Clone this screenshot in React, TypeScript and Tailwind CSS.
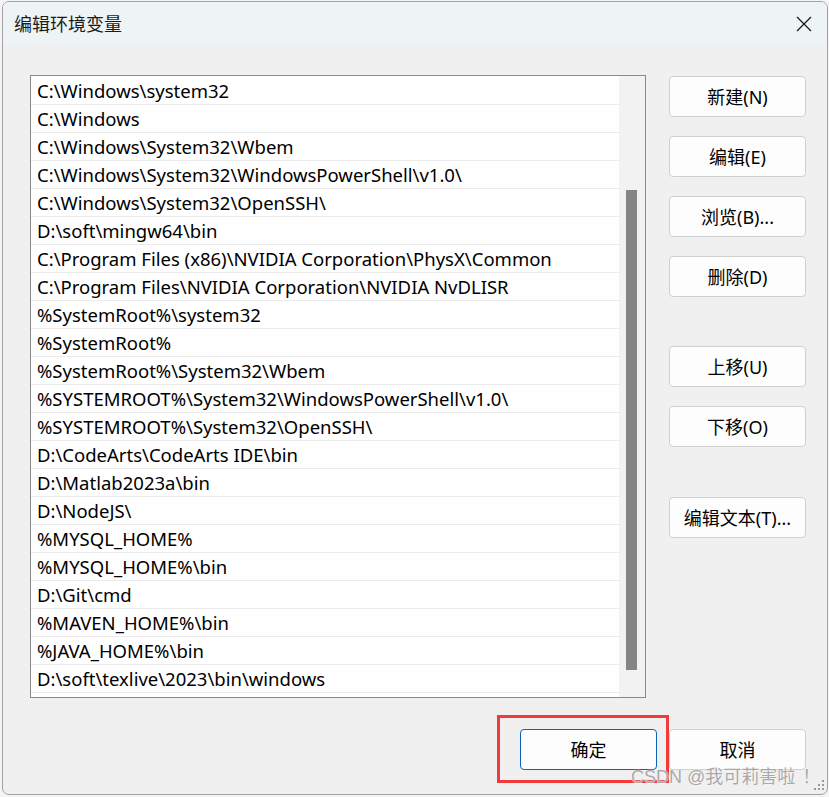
import React from "react";

const rows = [
  "C:\\Windows\\system32",
  "C:\\Windows",
  "C:\\Windows\\System32\\Wbem",
  "C:\\Windows\\System32\\WindowsPowerShell\\v1.0\\",
  "C:\\Windows\\System32\\OpenSSH\\",
  "D:\\soft\\mingw64\\bin",
  "C:\\Program Files (x86)\\NVIDIA Corporation\\PhysX\\Common",
  "C:\\Program Files\\NVIDIA Corporation\\NVIDIA NvDLISR",
  "%SystemRoot%\\system32",
  "%SystemRoot%",
  "%SystemRoot%\\System32\\Wbem",
  "%SYSTEMROOT%\\System32\\WindowsPowerShell\\v1.0\\",
  "%SYSTEMROOT%\\System32\\OpenSSH\\",
  "D:\\CodeArts\\CodeArts IDE\\bin",
  "D:\\Matlab2023a\\bin",
  "D:\\NodeJS\\",
  "%MYSQL_HOME%",
  "%MYSQL_HOME%\\bin",
  "D:\\Git\\cmd",
  "%MAVEN_HOME%\\bin",
  "%JAVA_HOME%\\bin",
  "D:\\soft\\texlive\\2023\\bin\\windows",
];

const font = "font-['Noto_Sans','Noto_Sans_CJK_SC',sans-serif]";

function Btn({ children, cls = "" }: { children: React.ReactNode; cls?: string }) {
  return (
    <div
      className={`w-[137px] h-[41px] rounded-[4px] border bg-[#fdfdfd] flex items-center justify-center text-[18px] leading-none text-black ${cls}`}
    >
      {children}
    </div>
  );
}

export default function App() {
  return (
    <div className={`relative w-[829px] h-[797px] overflow-hidden bg-[#f4f4f4] pl-[2px] pt-[1px] ${font}`}>
      <div className="w-[826px] h-[794px] rounded-[7px] border border-[#a3a3a3] bg-[#f0f0f0] overflow-hidden flex flex-col">
        {/* title bar */}
        <div className="h-[43px] bg-[#eef3f5] flex items-center justify-between pl-[11px] pr-[15px]">
          <span className="text-[18px] leading-none text-[#1b1b1b]">编辑环境变量</span>
          <svg width="16" height="16" viewBox="0 0 16 16">
            <path d="M1 1 L15 15 M15 1 L1 15" stroke="#1b1b1b" strokeWidth="1.3" />
          </svg>
        </div>
        {/* body */}
        <div className="flex-1 pl-[27px] pt-[30px] flex flex-col">
          <div className="flex">
            <div className="w-[616px] h-[623px] border border-[#8a8a8a] bg-white flex">
              <div className="w-[588px] pt-[1px] flex flex-col">
                {rows.map((r) => (
                  <div
                    key={r}
                    className="h-[28px] border-b border-[#ebebeb] flex items-center pl-[6px] pt-[2px] text-[18.5px] leading-none text-black whitespace-nowrap"
                  >
                    {r}
                  </div>
                ))}
              </div>
              <div className="w-[26px] h-full bg-[#f2f2f2] pl-[7px] pt-[114px]">
                <div className="w-[11px] h-[480px] bg-[#858585]" />
              </div>
            </div>
            <div className="ml-[23px] mt-[1px] flex flex-col">
              <Btn cls="border-[#d0d0d0]">新建(N)</Btn>
              <Btn cls="border-[#d0d0d0] mt-[19px]">编辑(E)</Btn>
              <Btn cls="border-[#d0d0d0] mt-[19px]">浏览(B)...</Btn>
              <Btn cls="border-[#d0d0d0] mt-[19px]">删除(D)</Btn>
              <Btn cls="border-[#d0d0d0] mt-[49px]">上移(U)</Btn>
              <Btn cls="border-[#d0d0d0] mt-[19px]">下移(O)</Btn>
              <Btn cls="border-[#d0d0d0] mt-[50px]">编辑文本(T)...</Btn>
            </div>
          </div>
          <div className="flex mt-[31px] ml-[490px]">
            <Btn cls="border-[#0a64b8]">确定</Btn>
            <Btn cls="border-[#d0d0d0] ml-[12px]">取消</Btn>
          </div>
        </div>
      </div>

      {/* red annotation box */}
      <div className="absolute left-[497px] top-[715px] w-[172px] h-[68px] border-[3px] border-[#f33a3a]" />

      {/* watermark */}
      <div
        className="absolute left-[631px] top-[766px] text-[18px] leading-none text-[#a8a8a8] whitespace-nowrap font-['Liberation_Sans',sans-serif]"
        style={{ textShadow: "0 0 1px #fff, 0 0 1px #fff" }}
      >
        CSDN @
        <span className="font-['Noto_Sans_CJK_SC',sans-serif]">我可莉害啦</span>
        <span className="ml-[7px] font-['Noto_Sans_CJK_SC',sans-serif]">！</span>
      </div>

      {/* resize grip */}
      <svg className="absolute left-[814px] top-[780px]" width="12" height="12" viewBox="0 0 12 12">
        <rect x="8" y="0" width="2" height="2" fill="#9a9a9a" />
        <rect x="4" y="4" width="2" height="2" fill="#9a9a9a" />
        <rect x="8" y="4" width="2" height="2" fill="#9a9a9a" />
        <rect x="0" y="8" width="2" height="2" fill="#9a9a9a" />
        <rect x="4" y="8" width="2" height="2" fill="#9a9a9a" />
        <rect x="8" y="8" width="2" height="2" fill="#9a9a9a" />
      </svg>
    </div>
  );
}
